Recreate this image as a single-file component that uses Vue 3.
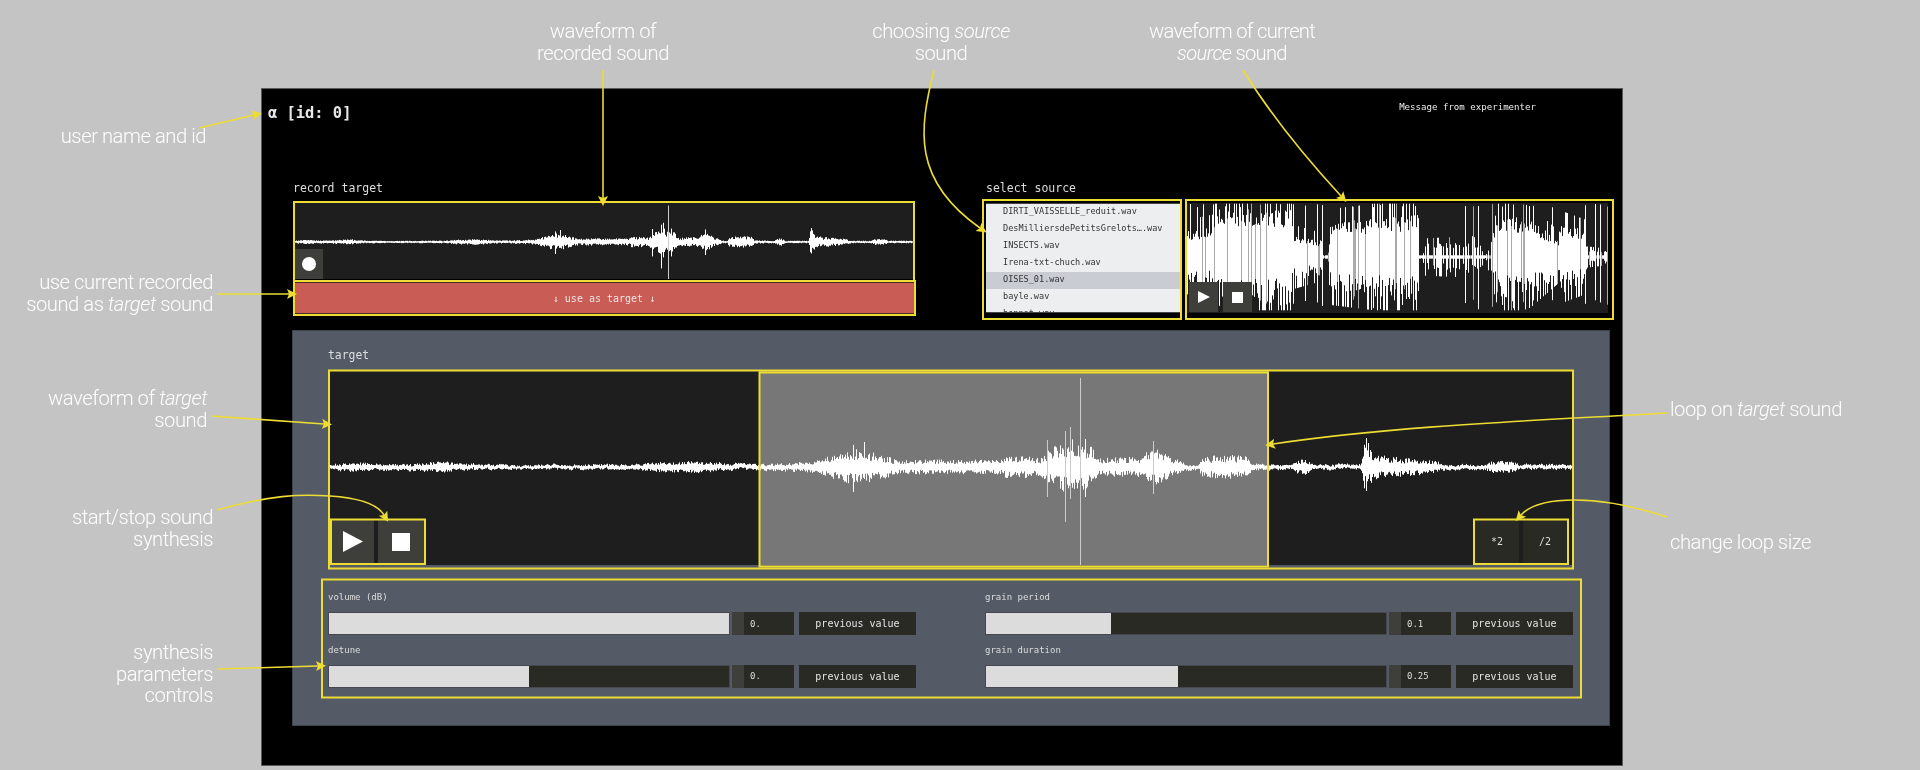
<script setup>
function rng(seed) {
  let a = seed
  return () => {
    a |= 0; a = (a + 0x6d2b79f5) | 0
    let t = Math.imul(a ^ (a >>> 15), 1 | a)
    t = (t + Math.imul(t ^ (t >>> 7), 61 | t)) ^ t
    return ((t ^ (t >>> 14)) >>> 0) / 4294967296
  }
}
function env(points, x) {
  if (x <= points[0][0]) return points[0][1]
  for (let i = 1; i < points.length; i++) {
    if (x <= points[i][0]) {
      const [x0, y0] = points[i - 1]
      const [x1, y1] = points[i]
      return y0 + ((y1 - y0) * (x - x0)) / (x1 - x0)
    }
  }
  return points[points.length - 1][1]
}

/* target sound: amplitude envelope in reference px */
const targetEnv = [
  [329, 2], [345, 3.5], [400, 2.5], [445, 5], [455, 3], [520, 1.8], [640, 2.5], [650, 4], [700, 5], [740, 2.5],
  [790, 3.5], [815, 5], [830, 9], [857, 15], [880, 11], [895, 6], [1000, 6], [1006, 9], [1025, 9], [1040, 7],
  [1052, 16], [1070, 23], [1090, 18], [1098, 8], [1140, 8], [1153, 17], [1170, 9], [1185, 3], [1198, 2.2],
  [1202, 9], [1245, 10], [1252, 3], [1292, 2.2], [1298, 7], [1307, 6], [1312, 2.2], [1360, 2.2], [1364, 18],
  [1375, 10], [1400, 8], [1430, 6], [1445, 2.2], [1485, 2.2], [1490, 5], [1512, 5], [1520, 2.2], [1573, 2.2]
]
const targetSpikes = [
  [853, 22, 25, 0], [864, 25, 12, 0], [1047, 27, 30, 1], [1065, 36, 55, 1], [1070, 40, 32, 1],
  [1080, 89, 98, 1], [1085, 28, 30, 0], [1153, 26, 27, 1], [1366, 29, 24, 0], [1368, 24, 12, 0]
]
function buildTarget() {
  const r = rng(7)
  const bars = []
  let j = 0
  for (let px = 0; px < 1244; px++) {
    const x = 329 + px
    const e = env(targetEnv, x)
    j = j * 0.7 + (r() - 0.5) * 1.3
    bars.push({
      up: Math.max(0.8, e * (0.45 + 0.8 * r())),
      down: Math.max(0.8, e * (0.45 + 0.8 * r())),
      j: e < 4 ? j : 0,
      gray: false
    })
  }
  for (const [x, up, down, gray] of targetSpikes) {
    bars[x - 329] = { up, down, j: 0, gray: !!gray }
  }
  return bars
}
function toPaths(bars, cy) {
  let white = ''
  let gray = ''
  bars.forEach((b, i) => {
    const s = `M${i + 0.5} ${(cy - b.up + b.j).toFixed(1)}V${(cy + b.down + b.j).toFixed(1)}`
    if (b.gray) gray += s
    else white += s
  })
  return { white, gray }
}
const targetBars = buildTarget()
const target = toPaths(targetBars, 96)
const recBars = []
for (let i = 0; i < 1244; i += 2) {
  const a = targetBars[i]
  const b = targetBars[i + 1] || a
  const tallest = a.up > b.up ? a : b
  const scale = tallest.up > 60 ? 0.41 : 0.48
  recBars.push({
    up: Math.max(0.7, tallest.up * scale),
    down: Math.max(0.7, tallest.down * scale),
    j: 0,
    gray: tallest.up > 60
  })
}
const rec = toPaths(recBars, 40)

/* source sound: keypoints measured in 3x crop units */
const srcEnv = [
  [22, 70], [100, 80], [105, 125], [330, 125], [340, 60], [425, 45], [432, 3], [443, 3], [450, 90], [715, 110],
  [718, 3], [728, 3], [732, 35], [840, 38], [860, 44], [905, 30], [908, 3], [916, 5], [960, 115], [1050, 95],
  [1140, 46], [1150, 85], [1215, 70], [1220, 20], [1285, 15]
]
const srcTall = [30, 50, 70, 100, 135, 180, 240, 270, 300, 340, 375, 410, 425, 520, 580, 600, 665, 705, 855, 880, 895, 935, 965, 1000, 1030, 1060, 1115, 1215, 1245, 1260, 1280]
function buildSource() {
  const r = rng(21)
  const bars = []
  for (let px = 0; px < 421; px++) {
    const zx = 21 + px * 3
    const e = env(srcEnv, zx)
    const tall = srcTall.some((t) => Math.abs(t - zx) < 2)
    const sparse = e < 45 && !tall && r() < 0.45
    const spike = r() < 0.25
    let up = tall ? 160 * (0.93 + 0.07 * r()) : spike ? Math.min(160, e * 1.6) : e * (0.7 + 0.45 * r())
    let down = tall ? 160 * (0.8 + 0.2 * r()) : r() < 0.3 ? Math.min(160, e * 1.6) : e * (0.5 + 0.75 * r())
    if (sparse) { up = 5; down = 5 }
    bars.push({ up: Math.max(1, up / 3), down: Math.max(1, down / 3), j: 0, gray: r() < 0.12 })
  }
  return bars
}
const source = toPaths(buildSource(), 54)

const files = [
  'DIRTI_VAISSELLE_reduit.wav',
  'DesMilliersdePetitsGrelots….wav',
  'INSECTS.wav',
  'Irena-txt-chuch.wav',
  'OISES_01.wav',
  'bayle.wav',
  'bonnet.wav'
]
const params = [
  { label: 'volume (dB)', value: '0.', fill: 100 },
  { label: 'grain period', value: '0.1', fill: 31.2 },
  { label: 'detune', value: '0.', fill: 50 },
  { label: 'grain duration', value: '0.25', fill: 48 }
]
const arrows = [
  'M199 128 L254 115',
  'M603 70 L603 198',
  'M934 70 C919 130 912 180 980 228',
  'M1243 70 Q1280 130 1341 196',
  'M217 294 L289 294',
  'M211 416 L324 424',
  'M217 510 C270 495 300 494 330 496 C360 498 378 505 384 515',
  'M217 669 L318 666',
  'M1667 413 C1550 420 1400 425 1273 444',
  'M1667 517 C1630 505 1600 500 1575 500 C1550 500 1530 505 1521 515'
]
const frames = [
  [294, 202, 620, 79], [294, 281, 621, 34], [983, 200, 198, 119], [1186, 200, 427, 119],
  [329, 370.5, 1244, 198], [759.5, 372.5, 508.5, 194], [331, 519.5, 94, 44.5], [1474, 519.5, 94, 44.5],
  [322, 579.5, 1259, 118]
]
</script>

<template>
  <div class="page">
    <main class="panel">
      <header class="header">
        <div class="user">α [id: 0]</div>
        <div class="message">Message from experimenter</div>
      </header>

      <section class="top">
        <div class="rec-col">
          <h2 class="title">record target</h2>
          <div class="rec-wave">
            <svg class="wave" viewBox="0 0 622 77" preserveAspectRatio="none">
              <path :d="rec.white" stroke="#fff" fill="none" />
              <path :d="rec.gray" stroke="#ccc" fill="none" />
            </svg>
            <button class="rec-btn"><span class="dot"></span></button>
          </div>
          <button class="use-btn">↓ use as target ↓</button>
        </div>
        <div class="src-col">
          <h2 class="title">select source</h2>
          <div class="src-row">
            <ul class="list">
              <li v-for="f in files" :key="f" :class="{ selected: f === 'OISES_01.wav' }">{{ f }}</li>
            </ul>
            <div class="src-wave">
              <svg class="wave" viewBox="0 0 421 110" preserveAspectRatio="none">
                <path :d="source.white" stroke="#fff" fill="none" />
                <path :d="source.gray" stroke="#aaa" fill="none" />
              </svg>
              <div class="src-btns">
                <button class="ctl small">
                  <svg width="12" height="12" viewBox="0 0 12 12"><path d="M0 0 L12 6 L0 12 Z" fill="#fff" /></svg>
                </button>
                <button class="ctl small">
                  <svg width="11" height="11" viewBox="0 0 11 11"><rect width="11" height="11" fill="#fff" /></svg>
                </button>
              </div>
            </div>
          </div>
        </div>
      </section>

      <section class="target">
        <h2 class="title">target</h2>
        <div class="target-wave">
          <div class="loop"></div>
          <svg class="wave" viewBox="-1 0 1245 194" preserveAspectRatio="none">
            <path :d="target.white" stroke="#fff" fill="none" />
            <path :d="target.gray" stroke="#ccc" fill="none" />
          </svg>
          <div class="big-btns play">
            <button class="ctl big">
              <svg width="20" height="21" viewBox="0 0 20 21"><path d="M0 0 L20 10.5 L0 21 Z" fill="#fff" /></svg>
            </button>
            <button class="ctl big">
              <svg width="18" height="18" viewBox="0 0 18 18"><rect width="18" height="18" fill="#fff" /></svg>
            </button>
          </div>
          <div class="big-btns size">
            <button class="ctl big dark">*2</button>
            <button class="ctl big dark">/2</button>
          </div>
        </div>
        <div class="params">
          <div v-for="p in params" :key="p.label" class="param">
            <div class="param-label">{{ p.label }}</div>
            <div class="param-row">
              <div class="slider"><div class="fill" :style="{ width: p.fill + '%' }"></div></div>
              <div class="num"><span class="strip"></span><span class="num-text">{{ p.value }}</span></div>
              <button class="prev">previous value</button>
            </div>
          </div>
        </div>
      </section>
    </main>

    <svg class="overlay" width="1920" height="770" viewBox="0 0 1920 770">
      <defs>
        <marker id="head" markerUnits="userSpaceOnUse" markerWidth="12" markerHeight="12" refX="2" refY="5" orient="auto">
          <path d="M0 0 L10 5 L0 10 L2 5 Z" fill="#ecdc33" />
        </marker>
      </defs>
      <rect v-for="(f, i) in frames" :key="'f' + i" :x="f[0]" :y="f[1]" :width="f[2]" :height="f[3]" fill="none" stroke="#ecdc33" stroke-width="2" />
      <path v-for="(d, i) in arrows" :key="'a' + i" :d="d" fill="none" stroke="#ecdc33" stroke-width="1.6" marker-end="url(#head)" />
    </svg>

    <div class="note center n-rec">waveform of<br />recorded sound</div>
    <div class="note center n-choose">choosing <em>source</em><br />sound</div>
    <div class="note center n-src">waveform of current<br /><em>source</em> sound</div>
    <div class="note right n-user">user name and id</div>
    <div class="note right n-use">use current recorded<br />sound as <em>target</em> sound</div>
    <div class="note right n-target">waveform of <em>target</em><br />sound</div>
    <div class="note right n-start">start/stop sound<br />synthesis</div>
    <div class="note right n-params">synthesis<br />parameters<br />controls</div>
    <div class="note n-loop">loop on <em>target</em> sound</div>
    <div class="note n-size">change loop size</div>
  </div>
</template>

<style>
html, body { margin: 0; background: #c4c4c4; overflow: hidden; }
</style>

<style scoped>
.page {
  position: relative;
  width: 1920px;
  height: 770px;
  padding: 88px 0 0 261px;
  box-sizing: border-box;
  background: #c4c4c4;
  overflow: hidden;
  font-family: "DejaVu Sans Mono", monospace;
  color: #e6e6e6;
  filter: blur(0.35px);
}
.panel {
  width: 1362px;
  height: 678px;
  box-sizing: border-box;
  background: #000;
  border: 1px solid #5a5a5a;
}
.header {
  display: flex;
  justify-content: space-between;
  height: 89px;
  padding: 0 86px 0 6px;
}
.user {
  margin-top: 14px;
  font-size: 15.4px;
  line-height: 20px;
  font-weight: 700;
  color: #e8e8e8;
}
.message {
  margin-top: 11px;
  font-size: 9.1px;
  line-height: 14px;
  color: #eee;
}
.top {
  display: flex;
  padding-left: 31px;
}
.title {
  margin: 0;
  height: 24px;
  font-size: 11.5px;
  line-height: 20px;
  font-weight: 400;
  color: #ddd;
}
.rec-col { width: 622px; }
.rec-wave {
  position: relative;
  height: 77px;
  background: #1e1e1e;
}
.wave {
  position: relative;
  z-index: 1;
  display: block;
  width: 100%;
  height: 100%;
}
.rec-btn {
  position: absolute;
  z-index: 2;
  left: 2px;
  bottom: 0;
  width: 28px;
  height: 30px;
  padding: 0;
  border: 0;
  background: #3e3f3a;
  display: flex;
  align-items: center;
  justify-content: center;
}
.dot {
  width: 14px;
  height: 14px;
  border-radius: 50%;
  background: #fff;
}
.use-btn {
  display: block;
  width: 622px;
  height: 32px;
  margin-top: 3px;
  padding: 0;
  border: 1px solid #4a2a28;
  background: #c95c55;
  color: #f0e6e4;
  font-family: inherit;
  font-size: 10px;
}
.src-col { margin-left: 71px; }
.src-row {
  display: flex;
  gap: 6px;
  padding-top: 1px;
}
.list {
  width: 195px;
  height: 110px;
  margin: 0;
  padding: 0;
  list-style: none;
  overflow: hidden;
  box-sizing: border-box;
  background: #eceef0;
  border-top: 1px solid #444;
  border-bottom: 1px solid #444;
}
.list li {
  height: 17px;
  padding-left: 17px;
  font-size: 8.55px;
  line-height: 15px;
  color: #333;
  white-space: nowrap;
}
.list li.selected { background: #c9ccd3; }
.src-wave {
  position: relative;
  width: 421px;
  height: 110px;
  background: #1e1e1e;
}
.src-btns {
  position: absolute;
  z-index: 2;
  left: 2px;
  bottom: 1px;
  display: flex;
  gap: 5px;
}
.ctl {
  display: flex;
  align-items: center;
  justify-content: center;
  padding: 0;
  border: 0;
  background: #3e3f3a;
  color: #ddd;
  font-family: inherit;
  font-size: 10px;
}
.ctl.small { width: 29px; height: 30px; }
.target {
  width: 1318px;
  height: 396px;
  box-sizing: border-box;
  margin: 16px 0 0 30px;
  padding: 13px 0 0 35px;
  background: #545b66;
  border: 1px solid #3c424b;
}
.target .title { height: 27px; line-height: 22px; font-size: 11.4px; }
.target-wave {
  position: relative;
  width: 1245px;
  height: 194px;
  background: #1e1e1e;
}
.loop {
  position: absolute;
  left: 431px;
  top: 0;
  width: 510px;
  height: 100%;
  background: #777;
}
.big-btns {
  position: absolute;
  z-index: 2;
  bottom: 2px;
  display: flex;
  gap: 4px;
}
.big-btns.play { left: 4px; }
.big-btns.size { right: 6px; }
.ctl.big { width: 44px; height: 43px; }
.big-btns.play .ctl:first-child { width: 42px; }
.big-btns.play .ctl:last-child { width: 46px; }
.ctl.dark { background: #292a24; }
.params {
  display: grid;
  grid-template-columns: 588px 588px;
  column-gap: 69px;
  margin-top: 21px;
}
.param { height: 52.5px; }
.param-label {
  height: 26px;
  font-size: 9px;
  line-height: 22px;
  color: #ddd;
}
.param-row {
  display: flex;
  height: 23px;
}
.slider {
  width: 402px;
  height: 100%;
  box-sizing: border-box;
  background: #292a24;
  border: 1px solid #45494f;
}
.fill { height: 100%; background: #dcdcdc; }
.num {
  display: flex;
  width: 62px;
  margin-left: 2px;
  background: #292a24;
  align-items: center;
}
.strip {
  width: 12px;
  height: 100%;
  margin-right: 6px;
  background: #3e3f3a;
}
.num-text { font-size: 9px; color: #ddd; }
.prev {
  width: 117px;
  margin-left: 5px;
  padding: 0;
  border: 0;
  background: #292a24;
  color: #e4e4e4;
  font-family: inherit;
  font-size: 10px;
}
.overlay {
  position: absolute;
  left: 0;
  top: 0;
  z-index: 5;
  pointer-events: none;
}
.note {
  position: absolute;
  z-index: 6;
  font-family: Roboto, "Liberation Sans", sans-serif;
  font-weight: 300;
  font-size: 20.2px;
  line-height: 21.5px;
  letter-spacing: -0.45px;
  color: #fff;
  white-space: nowrap;
}
.note.center { text-align: center; transform: translateX(-50%); }
.note.right { text-align: right; transform: translateX(-100%); }
.n-rec { left: 603px; top: 21px; }
.n-choose { left: 941px; top: 21px; }
.n-src { left: 1232px; top: 21px; letter-spacing: -0.7px; }
.n-user { left: 206px; top: 126px; }
.n-use { left: 213px; top: 272px; }
.n-target { left: 207px; top: 388px; }
.n-start { left: 213px; top: 507px; }
.n-params { left: 213px; top: 642px; }
.n-loop { left: 1670px; top: 399px; }
.n-size { left: 1670px; top: 532px; }
</style>
